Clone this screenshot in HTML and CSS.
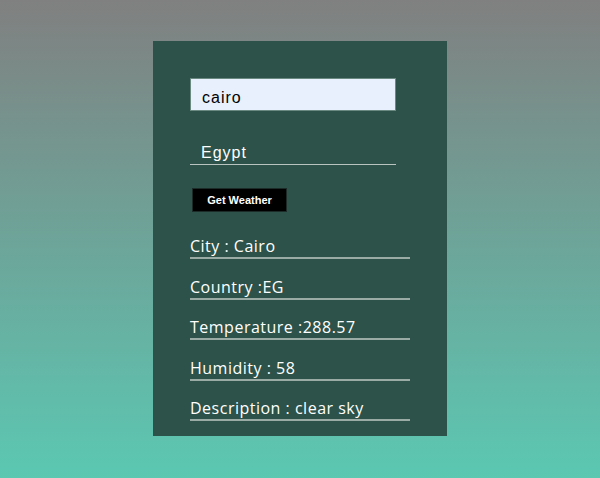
FILE: index.html
```html
<!DOCTYPE html>
<html>
<head>
<meta charset="utf-8">
<link rel="stylesheet" href="styles.css">
</head>
<body>
<div class="page">
  <div class="card">
    <input class="field field-city" type="text" value="cairo">
    <input class="field field-country" type="text" value="Egypt">
    <button class="btn">Get Weather</button>
    <div class="results">
      <p class="row">City : Cairo</p>
      <p class="row">Country :EG</p>
      <p class="row">Temperature :288.57</p>
      <p class="row">Humidity : 58</p>
      <p class="row">Description : clear sky</p>
    </div>
  </div>
</div>
</body>
</html>
```

FILE: styles.css
```css
html, body {
  margin: 0;
  padding: 0;
  height: 100%;
}
body {
  background: linear-gradient(to bottom, #808080 0%, #5bc8b2 100%);
  font-family: "Liberation Sans", Arial, sans-serif;
}
.page {
  display: flex;
  justify-content: center;
  padding-top: 41px;
}
.card {
  box-sizing: border-box;
  width: 294px;
  height: 395px;
  background: #2c5249;
  padding: 37px 37px 0 37px;
  display: flex;
  flex-direction: column;
  align-items: flex-start;
}
.field {
  box-sizing: border-box;
  width: 206px;
  height: 33px;
  padding: 7px 10px 0 11px;
  font-family: "Liberation Sans", Arial, sans-serif;
  font-size: 16px;
  letter-spacing: 1px;
  outline: none;
}
.field-city {
  background: #e8f0fe;
  color: #000;
  border: 1px solid #6a8981;
}
.field-country {
  margin-top: 21px;
  background: transparent;
  color: #fff;
  border: none;
  border-bottom: 1px solid #b9c4c0;
  padding-top: 10px;
}
.btn {
  margin-top: 23px;
  margin-left: 2px;
  width: 95px;
  height: 24px;
  background: #000;
  color: #fff;
  border: 1px solid #1c2b27;
  font-family: "Liberation Sans", Arial, sans-serif;
  font-weight: bold;
  font-size: 11px;
  padding: 0;
}
.results {
  margin-top: 23px;
  width: 220px;
  display: flex;
  flex-direction: column;
  gap: 16.6px;
}
.row {
  margin: 0;
  font-family: "Open Sans", "Noto Sans", sans-serif;
  font-size: 16px;
  letter-spacing: 0.5px;
  line-height: 22px;
  color: #fff;
  border-bottom: 2px solid #9aaaa5;
  padding-bottom: 0;
}
```
